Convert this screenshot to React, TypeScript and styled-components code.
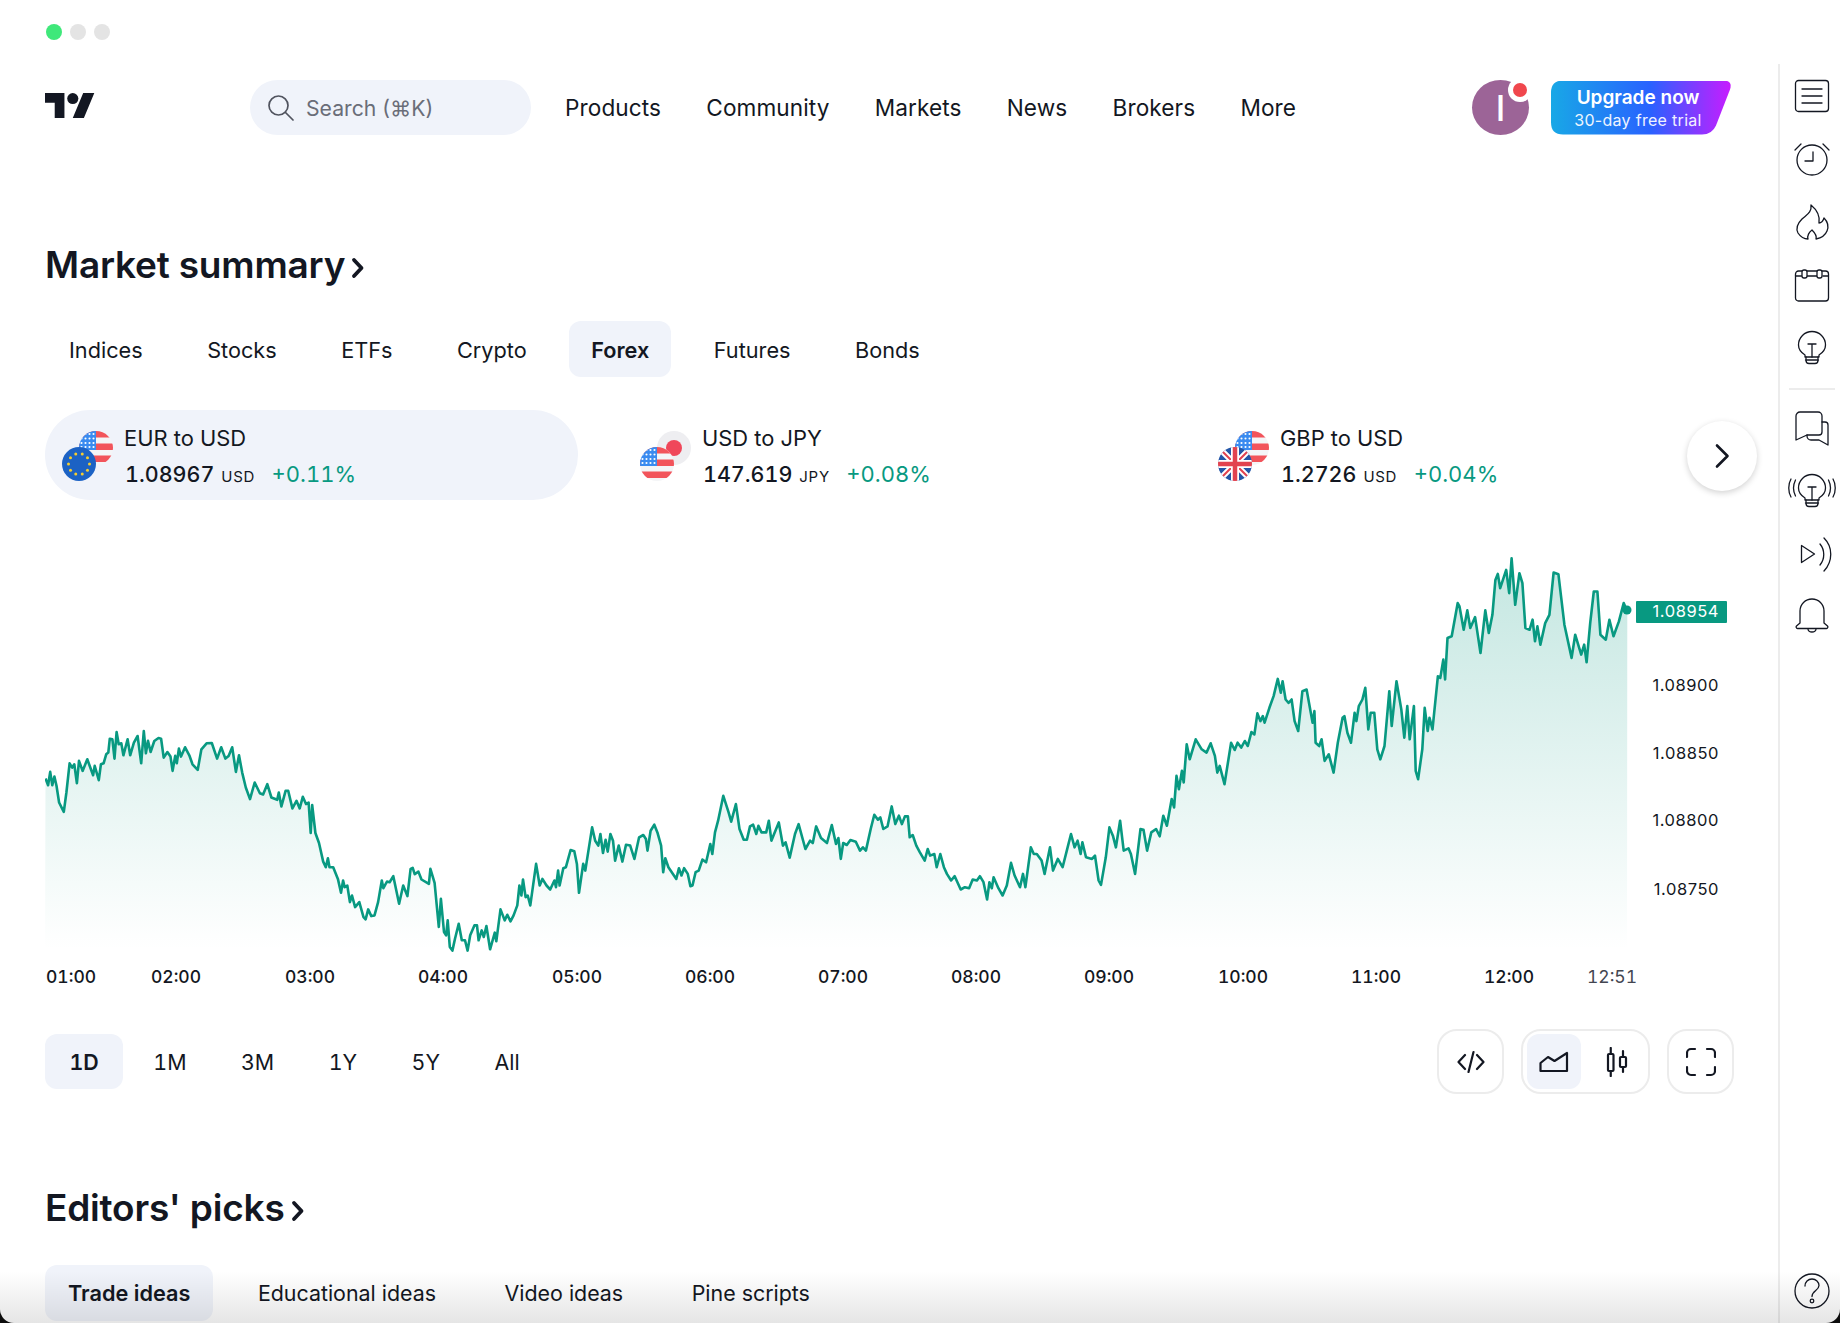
import React from 'react';
import styled, { createGlobalStyle } from 'styled-components';

const Global = createGlobalStyle`
  html, body { margin: 0; padding: 0; background: #fff; }
  * { box-sizing: border-box; }
  body { font-family: Inter, "Noto Sans", "Liberation Sans", sans-serif; color: #131722; }
`;

const INK = '#131722';
const PILL = '#f0f3fa';
const GREEN = '#089981';

const Win = styled.div`
  position: relative; display: flex; width: 1840px; height: 1323px; overflow: hidden; background: #fff;
`;
const Frame = styled.div`
  position: absolute; inset: 0; pointer-events: none; border-radius: 0 0 14px 14px;
  box-shadow: 0 0 0 20px #0c0c0c;
  background: linear-gradient(to bottom, rgba(0,0,0,0) calc(100% - 52px), rgba(0,0,0,.1) 100%);
`;
const Main = styled.main`
  flex: 1; min-width: 0; padding-left: 45px; display: flex; flex-direction: column;
`;
const Dots = styled.div`
  display: flex; gap: 8px; height: 16px; margin-top: 24px;
`;
const Dot = styled.span<{ $on?: boolean }>`
  width: 16px; height: 16px; border-radius: 50%; background: ${p => (p.$on ? '#3fe87a' : '#e4e4e4')};
  margin-left: ${p => (p.$on ? '1px' : '0')};
`;
const Header = styled.header`
  display: flex; align-items: center; height: 55px; margin-top: 40px; padding-right: 47px;
`;
const Logo = styled.svg`
  width: 50px; height: 25px; margin: 0 155px 4px 0; fill: ${INK}; flex: none;
`;
const Search = styled.div`
  display: flex; align-items: center; gap: 12px; width: 281px; height: 55px; padding-left: 17px;
  border-radius: 28px; background: ${PILL}; color: #6a6d78; font-size: 21.2px; flex: none;
  margin-right: 34px;
`;
const Nav = styled.nav`
  display: flex; gap: 45.2px; flex: 1;
`;
const NavItem = styled.a`
  font-size: 22.6px; font-weight: 400; letter-spacing: .1px; color: ${INK};
`;
const Avatar = styled.div`
  position: relative; width: 57px; height: 55px; border-radius: 50%; background: #9c6497; color: #fff;
  display: flex; align-items: center; justify-content: center; font-size: 35px; font-weight: 500; margin-right: 22px; flex: none;
`;
const Badge = styled.span`
  position: absolute; top: -2px; right: -3px; width: 24px; height: 24px; border-radius: 50%; background: #fff;
  &::after { content: ''; position: absolute; left: 5px; top: 5px; width: 14px; height: 14px; border-radius: 50%; background: #f0474d; }
`;
const Upgrade = styled.div`
  width: 180px; height: 54px; flex: none; color: #fff; text-align: center; padding-right: 6px;
  display: flex; flex-direction: column; justify-content: center;
  background: linear-gradient(90deg, #18a8e6 0%, #2962ff 55%, #c81cff 100%);
  clip-path: path('M12 0 H172 Q182 0 179 9 L165 45 Q161 54 151 54 H12 Q0 54 0 42 V12 Q0 0 12 0 Z');
`;
const UpTop = styled.div`
  font-size: 19px; font-weight: 600; line-height: 24px;
`;
const UpSub = styled.div`
  font-size: 16px; font-weight: 400; line-height: 20px; opacity: .92; letter-spacing: .3px;
`;
const H2 = styled.h2<{ $top: number }>`
  display: flex; align-items: center; gap: 6px; margin: ${p => p.$top}px 0 0; height: 44px; padding-bottom: 2px;
  font-size: 37px; font-weight: 600; letter-spacing: -.2px; color: ${INK};
`;
const Tabs = styled.div<{ $top: number; $gap: number }>`
  display: flex; gap: ${p => p.$gap}px; margin-top: ${p => p.$top}px; height: 56px;
`;
const MarketTabs = styled(Tabs)`
  margin-left: 2px;
`;
const Tab = styled.div<{ $on?: boolean; $pad: number; $after?: number; $size: number; $lift: number }>`
  display: flex; align-items: center; height: 100%; padding: ${p => p.$lift}px ${p => p.$pad}px 0; border-radius: 12px;
  font-size: ${p => p.$size}px; font-weight: ${p => (p.$on ? 600 : 400)};
  margin-right: ${p => p.$after ?? 0}px;
  background: ${p => (p.$on ? PILL : 'transparent')}; color: ${INK};
`;
const Symbols = styled.div`
  position: relative; display: flex; gap: 45px; margin-top: 33px; height: 90px;
`;
const Symbol = styled.div<{ $on?: boolean }>`
  display: flex; align-items: center; gap: 12px; width: 533px; height: 90px; padding-left: 17px;
  border-radius: 45px; background: ${p => (p.$on ? PILL : 'transparent')};
`;
const FlagPair = styled.div`
  position: relative; width: 50px; height: 50px; flex: none; margin-top: 2px;
`;
const FlagBack = styled.svg`
  position: absolute; top: 0; left: 17px; width: 34px; height: 34px;
`;
const FlagFront = styled.svg`
  position: absolute; top: 16px; left: 0; width: 34px; height: 34px;
`;
const SymInfo = styled.div`
  display: flex; flex-direction: column; gap: 9px; padding-top: 5px;
`;
const SymName = styled.div`
  font-size: 21.9px; font-weight: 400; line-height: 26px; color: ${INK};
`;
const SymLine = styled.div`
  display: flex; align-items: baseline; line-height: 28px; white-space: nowrap; font-variant-numeric: tabular-nums;
`;
const Price = styled.span`
  font-size: 21.5px; font-weight: 450; margin-left: 1px;
`;
const Unit = styled.span`
  font-size: 15px; font-weight: 400; margin-left: 7px; letter-spacing: .7px;
`;
const Change = styled.span`
  font-size: 22px; font-weight: 400; color: ${GREEN}; margin-left: 16.500px;
`;
const NextBtn = styled.button`
  position: absolute; left: 1642px; top: 11px; width: 70px; height: 70px; padding: 0; border: 0; border-radius: 50%;
  background: #fff; box-shadow: 0 2px 6px rgba(0,0,0,.18); display: flex; align-items: center; justify-content: center;
`;
const ChartSvg = styled.svg`
  display: block; width: 1695px; height: 460px; margin-top: 40px; flex: none;
`;
const Controls = styled.div`
  display: flex; justify-content: space-between; align-items: center; height: 65px; margin-top: 29px; padding-right: 44px;
`;
const Ranges = styled.div`
  display: flex; gap: 5.500px; height: 55px; font-variant-numeric: tabular-nums;
`;
const Range = styled.div<{ $on?: boolean }>`
  display: flex; align-items: center; height: 100%; padding: 1px 24.500px 0; border-radius: 12px;
  font-size: 21.4px; font-weight: ${p => (p.$on ? 600 : 400)}; background: ${p => (p.$on ? PILL : 'transparent')};
`;
const Tools = styled.div`
  display: flex; gap: 17px;
`;
const ToolBox = styled.div`
  display: flex; align-items: center; justify-content: center; height: 65px; min-width: 67px; padding: 0 4px;
  border: 2px solid #ececec; border-radius: 20px; gap: 9px;
`;
const ToolBtn = styled.div<{ $on?: boolean }>`
  display: flex; align-items: center; justify-content: center; width: 54px; height: 55px; border-radius: 12px;
  background: ${p => (p.$on ? PILL : 'transparent')};
`;
const Side = styled.aside`
  position: relative; width: 62px; flex: none; margin-top: 64px; border-left: 2px solid #ececec;
  display: flex; flex-direction: column; align-items: center; padding: 14px 0 0 4px;
`;
const SideIcon = styled.svg`
  display: block; width: 36px; height: 36px; margin-bottom: 27px; fill: none; stroke: ${INK}; stroke-width: 1.3px;
  stroke-linecap: round; stroke-linejoin: round; overflow: visible; flex: none;
`;
const SideDivider = styled.div`
  width: 46px; height: 2px; background: #ececec; margin: -5px 0 20px;
`;
const Help = styled(SideIcon)`
  margin: auto 0 14px;
`;
const Stroke = styled.svg`
  fill: none; stroke: ${INK}; stroke-width: 2.2px; stroke-linecap: round; stroke-linejoin: round; display: block;
`;
const HeadChevron = styled.svg`
  margin-top: 8px; fill: none; stroke: ${INK}; stroke-width: 3.8px; stroke-linecap: round; stroke-linejoin: round;
`;

const Chevron = () => (
  <HeadChevron width="14" height="24" viewBox="0 0 14 24">
    <path d="M3 4 10.500 12 3 20" />
  </HeadChevron>
);

const A: [number, number][] = [[87,718],[92,738],[96,698],[100,738],[104,712],[108,740],[113,790],[122,818],[127,760],[133,672],[138,685],[142,675],[147,732],[151,665],[158,695],[167,660],[178,708],[181,680],[189,723],[193,675],[198,672],[203,645],[207,640],[210,598],[215,600],[219,658],[223,578],[227,615],[232,612],[236,648],[244,600],[249,648],[256,610],[263,590],[270,672],[275,575],[279,642],[283,604],[288,638],[295,605],[303,596],[308,598],[313,655],[320,638],[326,652],[330,695],[335,650],[338,672],[342,628],[346,652],[354,624],[362,648],[368,675],[378,692],[385,630],[395,612],[405,611],[415,658],[423,624],[431,658],[437,650],[444,624],[451,698],[457,648],[463,700],[470,745],[478,780],[487,730],[497,762],[503,766],[511,735],[519,775],[530,782],[533,760],[538,802],[546,755],[551,755],[559,808],[567,785],[573,808],[579,773],[585,795],[590,790],[594,882],[597,798],[603,882],[610,912],[618,968],[623,985],[627,958],[630,985],[637,985],[646,1020],[652,1062],[656,1025],[659,1045],[664,1040],[669,1090],[673,1070],[679,1105],[687,1090],[695,1135],[699,1142],[704,1112],[710,1132],[716,1130],[723,1090],[730,1025],[733,1048],[740,1028],[745,1030],[752,1012],[763,1095],[771,1040],[779,1072],[785,990],[789,987],[793,1006],[800,998],[806,1022],[820,1035],[823,990],[831,1032],[839,1165],[843,1080],[849,1180],[853,1190],[856,1145],[860,1225],[865,1236],[870,1200],[877,1155],[883,1205],[889,1205],[894,1236],[899,1190],[907,1160],[912,1160],[915,1205],[921,1175],[925,1195],[930,1162],[937,1232],[946,1182],[949,1208],[957,1112],[965,1145],[970,1128],[976,1148],[982,1130],[989,1100],[993,1040],[997,1070],[1000,1022],[1005,1075],[1009,1070],[1014,1100],[1025,975],[1032,1040],[1037,1020],[1045,1040],[1052,1052],[1060,1025],[1063,1045],[1067,995],[1070,1040],[1077,988],[1082,985],[1091,933],[1098,937],[1103,975],[1107,1062],[1115,975],[1119,995],[1132,865],[1138,905],[1144,920],[1148,885],[1153,942],[1158,902],[1162,938],[1167,885],[1172,905],[1176,965],[1183,920],[1190,968],[1197,917],[1205,920],[1213,960],[1222,895],[1230,888],[1235,900],[1238,935],[1244,875],[1251,857],[1257,880],[1264,920],[1268,1000],[1272,958],[1278,985],[1293,1020],[1298,988],[1303,1010],[1308,988],[1315,1005],[1320,1042],[1324,1040],[1330,1000],[1336,995],[1343,962],[1350,970],[1358,915],[1362,945],[1367,880],[1373,845],[1383,770],[1393,820],[1398,848],[1407,795],[1414,870],[1422,902],[1428,902],[1434,862],[1440,857],[1446,885],[1450,860],[1456,880],[1465,880],[1470,845],[1475,905],[1480,885],[1489,850],[1497,920],[1502,910],[1510,956],[1520,885],[1527,855],[1540,930],[1549,905],[1554,912],[1560,865]];
const B: [number, number][] = [[27,862],[35,897],[45,912],[53,858],[60,915],[64,897],[68,960],[72,912],[78,918],[84,903],[93,908],[100,935],[105,925],[110,935],[118,870],[124,827],[130,842],[134,835],[139,870],[146,862],[153,802],[159,855],[165,830],[170,855],[175,832],[180,832],[183,895],[188,888],[194,920],[200,940],[208,965],[213,930],[217,950],[224,945],[228,985],[234,945],[240,985],[245,1005],[252,1025],[258,1012],[268,1052],[275,1045],[282,1048],[288,1022],[295,1025],[300,1012],[306,1030],[312,1082],[316,1030],[320,1048],[323,1015],[331,1048],[338,1070],[345,1040],[352,972],[358,1010],[367,1045],[372,1005],[376,1045],[385,925],[390,945],[395,945],[403,965],[408,1005],[417,925],[422,995],[430,960],[438,985],[445,935],[452,885],[458,925],[463,905],[468,945],[471,910],[477,955],[487,960],[492,950],[498,1025],[502,1038],[510,955],[516,865],[522,890],[527,925],[534,845],[540,935],[548,928],[552,945],[559,1005],[568,870],[573,872],[579,935],[586,880],[594,870],[600,892],[606,830],[612,860],[620,780],[624,805],[628,710],[632,750],[637,695],[640,730],[645,615],[650,660],[660,600],[670,630],[678,640],[685,612],[692,650],[696,700],[700,680],[708,735],[719,610],[725,632],[730,610],[736,625],[742,605],[747,620],[753,578],[758,585],[763,522],[768,545],[772,530],[775,550],[783,505],[790,470],[797,418],[802,460],[805,425],[810,480],[815,490],[820,480],[825,545],[831,575],[838,455],[845,450],[852,520],[855,550],[858,515],[860,610],[866,620],[870,600],[875,665],[882,645],[890,700],[897,610],[905,535],[908,530],[913,580],[919,610],[925,520],[928,545],[932,500],[938,480],[943,445],[948,570],[952,520],[958,520],[963,630],[968,660],[975,620],[983,455],[987,560],[995,425],[1003,510],[1008,595],[1013,500],[1017,600],[1024,500],[1027,695],[1031,720],[1038,630],[1042,505],[1047,575],[1050,535],[1055,570],[1064,410],[1068,415],[1073,360],[1076,420],[1080,295],[1087,290],[1097,190],[1100,200],[1107,270],[1113,212],[1118,265],[1126,232],[1135,340],[1143,212],[1149,280],[1155,225],[1160,120],[1164,102],[1168,145],[1178,90],[1183,160],[1187,55],[1193,195],[1200,100],[1205,130],[1210,265],[1217,270],[1222,240],[1226,305],[1230,260],[1235,315],[1243,250],[1250,225],[1257,98],[1265,103],[1275,255],[1287,355],[1293,285],[1303,345],[1308,315],[1312,368],[1318,250],[1324,155],[1330,155],[1335,285],[1344,300],[1350,240],[1357,290],[1366,245],[1374,190],[1380,215]];
const pts = [
  ...A.map(([x, y]) => [x / 1.912, 540 + y / 3.01]),
  ...B.map(([x, y]) => [800 + x / 1.668, 540 + y / 3.01]),
].map(([x, y]) => `${x.toFixed(1)} ${y.toFixed(1)}`);
const LINE = 'M' + pts.join('L');
const AREA = LINE + 'L1627 950L45 950Z';

const HOURS: [string, number][] = [['02:00',176],['03:00',310],['04:00',443],['05:00',577],['06:00',710],['07:00',843],['08:00',976],['09:00',1109],['10:00',1243],['11:00',1376],['12:00',1509]];
const LEVELS: [string, number][] = [['1.08900',685],['1.08850',753],['1.08800',820],['1.08750',889]];

const AxisText = styled.text<{ $strong?: boolean }>`
  font-size: 17.5px; font-variant-numeric: tabular-nums; font-weight: ${p => (p.$strong ? 500 : 400)};
`;
const LevelText = styled.text`
  font-size: 16.5px; letter-spacing: .55px;
`;

const Chart = () => (
  <ChartSvg viewBox="45 540 1695 460" fontFamily="Inter, sans-serif">
    <defs>
      <linearGradient id="fill" gradientUnits="userSpaceOnUse" x1="0" y1="556" x2="0" y2="950">
        <stop offset="0" stopColor={GREEN} stopOpacity=".24" />
        <stop offset="1" stopColor={GREEN} stopOpacity="0" />
      </linearGradient>
    </defs>
    <path d={AREA} fill="url(#fill)" />
    <path d={LINE} fill="none" stroke={GREEN} strokeWidth="2.6" strokeLinejoin="round" />
    <circle cx="1627" cy="610" r="4.5" fill={GREEN} />
    <rect x="1636" y="601" width="91" height="22" rx="1" fill={GREEN} />
    <LevelText x="1719" y="616.5" textAnchor="end" fill="#fff">1.08954</LevelText>
    {LEVELS.map(([t, y]) => (
      <LevelText key={t} x="1719" y={y + 6} textAnchor="end" fill={INK}>{t}</LevelText>
    ))}
    <AxisText $strong x="46" y="983" fill={INK}>01:00</AxisText>
    {HOURS.map(([t, x]) => (
      <AxisText $strong key={t} x={x} y="983" textAnchor="middle" fill={INK}>{t}</AxisText>
    ))}
    <AxisText x="1612" y="983" textAnchor="middle" fill="#434651">12:51</AxisText>
  </ChartSvg>
);

const UsBody = () => (
  <g clipPath="url(#disc)">
    <rect width="34" height="34" fill="#f4f5f7" />
    {[0, 12.5, 24.5].map(y => <rect key={y} x="0" y={y} width="34" height="6.5" fill="#f2545b" />)}
    <rect width="17" height="19" fill="#3a8bf0" />
    {[3, 7.5, 12, 16].map(y => [2.5, 6.5, 10.5, 14.5].map(x => <circle key={`${x}-${y}`} cx={x} cy={y} r="1.05" fill="#fff" />))}
  </g>
);
const EuBody = () => (
  <>
    <circle cx="17" cy="17" r="17" fill="#1c62c4" />
    {Array.from({ length: 10 }).map((_, i) => {
      const a = (i / 10) * Math.PI * 2;
      return <circle key={i} cx={17 + 10.5 * Math.cos(a)} cy={17 + 10.5 * Math.sin(a)} r="1.5" fill="#f5cd2f" />;
    })}
  </>
);
const JpBody = () => (
  <>
    <circle cx="17" cy="17" r="17" fill="#eeeef1" />
    <circle cx="17" cy="17" r="8" fill="#f0475a" />
  </>
);
const UkBody = () => (
  <g clipPath="url(#disc)">
    <rect width="34" height="34" fill="#2356a8" />
    <path d="M0 0 34 34M34 0 0 34" stroke="#fff" strokeWidth="6" />
    <path d="M0 0 34 34M34 0 0 34" stroke="#e2434f" strokeWidth="2" />
    <path d="M17 0V34M0 17H34" stroke="#fff" strokeWidth="8" />
    <path d="M17 0V34M0 17H34" stroke="#e2434f" strokeWidth="4.5" />
  </g>
);
const Flags = ({ back, front }: { back: React.ReactNode; front: React.ReactNode }) => (
  <FlagPair>
    <FlagBack viewBox="0 0 34 34">{back}</FlagBack>
    <FlagFront viewBox="0 0 34 34">{front}</FlagFront>
  </FlagPair>
);

const ITEMS = [
  { name: 'EUR to USD', price: '1.08967', unit: 'USD', change: '+0.11%', back: <UsBody />, front: <EuBody />, on: true },
  { name: 'USD to JPY', price: '147.619', unit: 'JPY', change: '+0.08%', back: <JpBody />, front: <UsBody /> },
  { name: 'GBP to USD', price: '1.2726', unit: 'USD', change: '+0.04%', back: <UsBody />, front: <UkBody /> },
];

const BulbPaths = () => (
  <>
    <path d="M11 27v-2C7 22.500 4.500 19 4.500 15a13.500 13.500 0 1 1 27 0c0 4-2.500 7.500-6.500 10v2z" />
    <path d="M12 27v3.500a3 3 0 0 0 3 3h6a3 3 0 0 0 3-3V27M11.500 30h13M14 14h8M18 14v13" />
  </>
);

export default function App() {
  return (
    <Win>
      <Global />
      <svg width="0" height="0" style={{ position: 'absolute' }}>
        <defs><clipPath id="disc"><circle cx="17" cy="17" r="17" /></clipPath></defs>
      </svg>
      <Main>
        <Dots><Dot $on /><Dot /><Dot /></Dots>
        <Header>
          <Logo viewBox="0 4 36 18">
            <path d="M14 22H7V11H0V4h14v18ZM28 22h-8l7.500-18h8L28 22Z" />
            <circle cx="20" cy="8" r="4" />
          </Logo>
          <Search>
            <svg width="27" height="27" viewBox="0 0 27 27" fill="none" stroke="#50535e" strokeWidth="1.7" strokeLinecap="round">
              <circle cx="11.500" cy="11.500" r="9.500" />
              <path d="M18.500 18.500 26 26" />
            </svg>
            <span>Search (⌘K)</span>
          </Search>
          <Nav>
            {['Products', 'Community', 'Markets', 'News', 'Brokers', 'More'].map(n => <NavItem key={n}>{n}</NavItem>)}
          </Nav>
          <Avatar>I<Badge /></Avatar>
          <Upgrade>
            <UpTop>Upgrade now</UpTop>
            <UpSub>30-day free trial</UpSub>
          </Upgrade>
        </Header>
        <H2 $top={108}>Market summary<Chevron /></H2>
        <MarketTabs $top={34} $gap={20.5}>
          {['Indices', 'Stocks', 'ETFs', 'Crypto', 'Forex', 'Futures', 'Bonds'].map(t => (
            <Tab key={t} $pad={22} $size={21.7} $lift={1} $on={t === 'Forex'}>{t}</Tab>
          ))}
        </MarketTabs>
        <Symbols>
          {ITEMS.map(s => (
            <Symbol key={s.name} $on={s.on}>
              <Flags back={s.back} front={s.front} />
              <SymInfo>
                <SymName>{s.name}</SymName>
                <SymLine>
                  <Price>{s.price}</Price>
                  <Unit>{s.unit}</Unit>
                  <Change>{s.change}</Change>
                </SymLine>
              </SymInfo>
            </Symbol>
          ))}
          <NextBtn aria-label="Next">
            <svg width="18" height="26" viewBox="0 0 18 26" fill="none" stroke={INK} strokeWidth="2.600" strokeLinecap="round" strokeLinejoin="round">
              <path d="M4 2.500 14.500 13 4 23.500" />
            </svg>
          </NextBtn>
        </Symbols>
        <Chart />
        <Controls>
          <Ranges>
            {['1D', '1M', '3M', '1Y', '5Y', 'All'].map(r => <Range key={r} $on={r === '1D'}>{r}</Range>)}
          </Ranges>
          <Tools>
            <ToolBox>
              <Stroke width="28" height="24" viewBox="0 0 28 24">
                <path d="M8 5 1.500 12 8 19M20 5l6.500 7L20 19M16.500 2l-5 20" />
              </Stroke>
            </ToolBox>
            <ToolBox>
              <ToolBtn $on>
                <Stroke width="30" height="22" viewBox="0 0 30 22">
                  <path d="M1.500 20V12L9 6l6.500 4L28 2v18z" />
                </Stroke>
              </ToolBtn>
              <ToolBtn>
                <Stroke width="22" height="30" viewBox="0 0 22 30">
                  <rect x="2" y="7" width="5.500" height="17" rx="1" />
                  <path d="M4.750 1v6M4.750 24v5M17 4v6M17 20v5" />
                  <rect x="14" y="10" width="6" height="10" rx="1" />
                </Stroke>
              </ToolBtn>
            </ToolBox>
            <ToolBox>
              <Stroke width="30" height="30" viewBox="0 0 30 30">
                <path d="M9 2H5a4 4 0 0 0-4 4v4M21 2h4a4 4 0 0 1 4 4v4M9 28H5a4 4 0 0 1-4-4v-4M21 28h4a4 4 0 0 0 4-4v-4" />
              </Stroke>
            </ToolBox>
          </Tools>
        </Controls>
        <H2 $top={92}>Editors' picks<Chevron /></H2>
        <Tabs $top={35} $gap={25.5}>
          <Tab $pad={23} $size={21.7} $lift={0} $on $after={-2.5}>Trade ideas</Tab>
          <Tab $pad={21.5} $size={21.4} $lift={0}>Educational ideas</Tab>
          <Tab $pad={21.5} $size={21.4} $lift={0}>Video ideas</Tab>
          <Tab $pad={21.5} $size={21.4} $lift={0}>Pine scripts</Tab>
        </Tabs>
      </Main>
      <Side>
        <SideIcon viewBox="0 0 36 36">
          <rect x="1.500" y="2.500" width="33" height="31" rx="3" />
          <path d="M8 11h20M8 18h20M8 25h20" />
        </SideIcon>
        <SideIcon viewBox="0 0 36 36">
          <circle cx="18" cy="19" r="15" />
          <path d="M19 11v9h-8M1 9l6-6M35 9l-6-6" />
        </SideIcon>
        <SideIcon viewBox="0 0 36 36">
          <path d="M17 1c1 8-5 10-9 14C3 20 2 25 4 29c2 3 6 6 10 6-1-3 1-7 4-9 2 2 5 6 4 9 5-1 9-3 11-8 2-5 0-10-3-13-1 3-3 5-5 5 1-6-2-13-8-18z" />
        </SideIcon>
        <SideIcon viewBox="0 0 36 36">
          <rect x="1.500" y="4" width="33" height="30" rx="3" />
          <path d="M1.500 9h6M13 9h10M29 9h5.500" />
          <rect x="8" y="3" width="5" height="8" rx="2" fill="#fff" />
          <rect x="23" y="3" width="5" height="8" rx="2" fill="#fff" />
        </SideIcon>
        <SideIcon viewBox="0 0 36 36"><BulbPaths /></SideIcon>
        <SideDivider />
        <SideIcon viewBox="0 0 36 36">
          <path d="M2 30V6a4 4 0 0 1 4-4h18a4 4 0 0 1 4 4v16a3 3 0 0 1-3 3H13z" />
          <path d="M28 12h3a3 3 0 0 1 3 3v20l-9-5h-8a4 4 0 0 1-4-4v-1" />
        </SideIcon>
        <SideIcon viewBox="0 0 36 36">
          <BulbPaths />
          <path d="M1.500 7c-2.500 5-2.500 11 0 16M-3 6c-3 5-3 13 0 18M34.500 7c2.500 5 2.500 11 0 16M39 6c3 5 3 13 0 18" />
        </SideIcon>
        <SideIcon viewBox="0 0 36 36">
          <path d="M7.500 9.500v17l13-8.500z" />
          <path d="M26 8c5 6 5 15 0 21M30 2c9 9 9 23 0 33" />
        </SideIcon>
        <SideIcon viewBox="0 0 36 36">
          <path d="M6 24V12a12 12 0 0 1 24 0v12l3.500 3a1.500 1.500 0 0 1-1 2.500h-29a1.500 1.500 0 0 1-1-2.500z" />
          <path d="M14 30a4 3 0 0 0 8 0" />
        </SideIcon>
        <Help viewBox="0 0 36 36">
          <circle cx="18" cy="18" r="17" />
          <path d="M11 13c0-4 3-7 7-7s7 3 7 6.500c0 5-7 5-7 11" />
          <circle cx="18" cy="28" r="1.800" />
        </Help>
      </Side>
      <Frame />
    </Win>
  );
}
